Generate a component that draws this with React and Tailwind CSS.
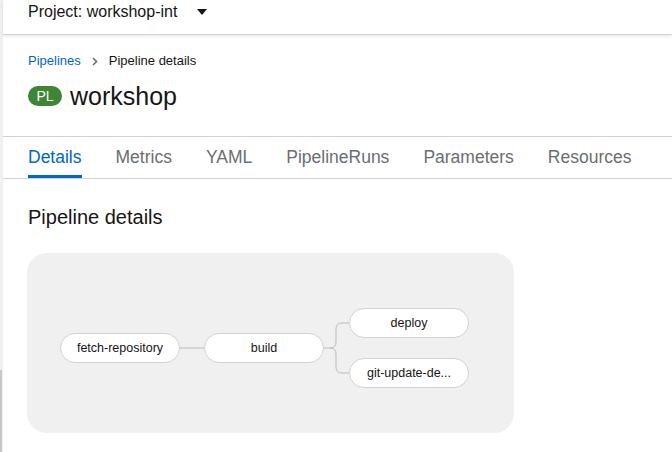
const tabs = ["Details", "Metrics", "YAML", "PipelineRuns", "Parameters", "Resources"];

function Node({ label, className }) {
  return (
    <div
      className={`absolute h-[30px] w-[120px] rounded-full border border-[#d2d2d2] bg-white flex items-center justify-center text-[12.5px] text-[#151515] ${className}`}
    >
      {label}
    </div>
  );
}

export default function App() {
  return (
    <div
      className="flex min-h-[452px] w-[672px] bg-white text-[#151515]"
      style={{ fontFamily: '"Liberation Sans", Arial, sans-serif' }}
    >
      {/* left edge strip */}
      <div className="flex w-[3px] flex-col">
        <div className="h-[370px] bg-[#f0f0f0]" />
        <div className="flex-1 border-l-2 border-[#c8c8c8] bg-[#f0f0f0]" />
      </div>

      <div className="flex-1">
        {/* Project bar */}
        <div className="h-[35px] border-b border-[#d2d2d2] shadow-[0_2px_3px_rgba(0,0,0,0.08)]">
          <div className="flex items-center pl-[25px] pt-[2px] leading-5">
            <span className="text-[16px]">Project: workshop-int</span>
            <svg className="ml-[20px]" width="10" height="6" viewBox="0 0 10 6">
              <path d="M0 0 H10 L5 6 Z" fill="#151515" />
            </svg>
          </div>
        </div>

        {/* Heading */}
        <div className="border-b border-[#d2d2d2] px-[25px] pt-[16px] pb-[25px]">
          <div className="flex items-center text-[13px] leading-5">
            <span className="text-[#0066cc]">Pipelines</span>
            <svg className="mx-[11px]" width="6" height="9" viewBox="0 0 6 9">
              <path d="M1 1 L4.5 4.5 L1 8" stroke="#6a6e73" strokeWidth="1.6" fill="none" />
            </svg>
            <span>Pipeline details</span>
          </div>
          <div className="mt-[10px] flex h-[30px] items-center gap-2">
            <span className="flex h-[20px] w-[34px] items-center justify-center rounded-full bg-[#3e8635] text-[14px] text-white">
              PL
            </span>
            <span className="text-[25px] leading-[30px]">workshop</span>
          </div>
        </div>

        {/* Tabs */}
        <div className="flex gap-[34px] border-b border-[#d2d2d2] px-[25px]">
          {tabs.map((t, i) => (
            <div
              key={t}
              className={`border-b-[3px] pt-[8px] pb-[6px] text-[17.5px] leading-6 ${
                i === 0 ? "border-[#0066cc] text-[#0066cc]" : "border-transparent text-[#6a6e73]"
              }`}
            >
              {t}
            </div>
          ))}
        </div>

        {/* Body */}
        <div className="px-[25px] pt-[24px]">
          <h2 className="text-[20px] leading-7">Pipeline details</h2>
          <div className="relative mt-[22px] ml-[-1px] h-[180px] w-[487px] rounded-[20px] bg-[#f0f0f0]">
            <svg className="absolute inset-0" width="487" height="180">
              <g stroke="#b8bbbe" strokeWidth="1" fill="none">
                <path d="M152 95 H177" />
                <path d="M297 95 H303 Q309 95 309 89 V76 Q309 70 315 70 H322" />
                <path d="M303 95 Q309 95 309 101 V114 Q309 120 315 120 H322" />
              </g>
            </svg>
            <Node label="fetch-repository" className="left-[33px] top-[80px] w-[119px]" />
            <Node label="build" className="left-[177px] top-[80px]" />
            <Node label="deploy" className="left-[322px] top-[55px]" />
            <Node label="git-update-de..." className="left-[322px] top-[105px]" />
          </div>
        </div>
      </div>
    </div>
  );
}
